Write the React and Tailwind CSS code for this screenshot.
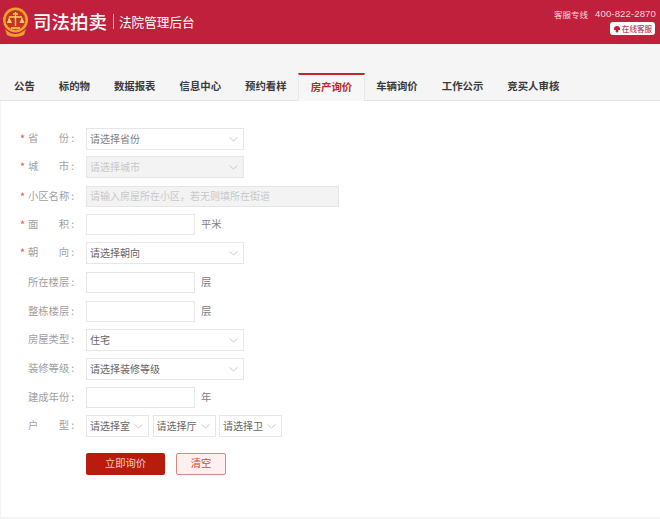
import React from "react";

const font = { fontFamily: '"Noto Sans CJK SC", "Liberation Sans", sans-serif' };

const tabs = ["公告", "标的物", "数据报表", "信息中心", "预约看样", "房产询价", "车辆询价", "工作公示", "竞买人审核"];

function Chevron() {
  return (
    <svg width="9" height="5" viewBox="0 0 9 5" fill="none" className="shrink-0">
      <path d="M0.5 0.5 L4.5 4 L8.5 0.5" stroke="#c4c4c4" strokeWidth="0.9" />
    </svg>
  );
}

function Select({ text, width = "w-[158px]", disabled = false, dark = false }) {
  return (
    <div
      className={`${width} h-[22px] flex items-center justify-between pl-[3px] pr-[5px] border border-[#e6e6e6] ${
        disabled ? "bg-[#f3f3f3] text-[#c8c8c8]" : "bg-white"
      } ${dark ? "text-[#666666]" : disabled ? "" : "text-[#808080]"} text-[10px]`}
    >
      <span className="whitespace-nowrap pb-[2px]">{text}</span>
      <Chevron />
    </div>
  );
}

function Input({ unit }) {
  return (
    <div className="flex items-center">
      <div className="w-[109px] h-[21px] border border-[#e6e6e6] bg-white" />
      <span className="ml-[6px] pb-[2px] text-[10.3px] text-[#808080]">{unit}</span>
    </div>
  );
}

function Label({ a, b, req }) {
  return (
    <div className="w-[85px] shrink-0 flex items-center text-[10.3px] text-[#a0a0a0] pb-[2px]">
      <span className="w-[8px] ml-[19px] text-[#e2574c] text-[11px] leading-none">{req ? "*" : ""}</span>
      <span className="w-[46px] flex justify-between whitespace-nowrap">
        {b ? (
          <>
            <span>{a}</span>
            <span>{b}<span className="ml-[2px]">:</span></span>
          </>
        ) : (
          <span>{a}<span className="ml-[2px]">:</span></span>
        )}
      </span>
    </div>
  );
}

function Row({ h, children }) {
  return <div className={`flex items-start ${h}`}>{children}</div>;
}

function Lbl({ children }) {
  return <div className="h-[22px] flex items-center">{children}</div>;
}

export default function App() {
  return (
    <div className="w-[660px] h-[519px] bg-[#f5f5f5] overflow-hidden flex flex-col" style={font}>
      <header className="h-[44px] shrink-0 bg-[#c0203b] flex justify-between text-white">
        <div className="flex items-center pl-[2px] pb-[1px]">
          <svg width="27" height="32" viewBox="0 0 27 32">
            <path d="M3 23 Q13 33 24 23 L22 29 Q13 33 5 29 Z" fill="#e8a030" />
            <circle cx="13.5" cy="14" r="12.5" fill="#f0a32c" />
            <circle cx="13.5" cy="14" r="10" fill="#c9331f" />
            <path d="M13.5 6 V20 M11 8 H16 M7 11 H20 M9 22 H18" stroke="#f7d36a" strokeWidth="1.4" fill="none" />
            <path d="M7 11 L5 17 H10 Z M20 11 L17.5 17 H22.5 Z" fill="#f7d36a" />
          </svg>
          <span className="ml-[4px] text-[18.5px] font-medium leading-none whitespace-nowrap">司法拍卖</span>
          <span className="ml-[6px] w-px h-[15px] bg-[#eeb9c2]" />
          <span className="ml-[5px] text-[12.6px] leading-none mt-[2px] whitespace-nowrap">法院管理后台</span>
        </div>
        <div className="flex flex-col items-end pr-[5px] pt-[8px]">
          <div className="flex items-center leading-[12px] text-[#f6d8dd] -mr-px">
            <span className="text-[8.5px]">客服专线</span>
            <span className="ml-[7px] text-[9.6px] tracking-[0.1px]" style={{ fontFamily: '"Liberation Sans", sans-serif' }}>
              400-822-2870
            </span>
          </div>
          <div className="mt-[2px] w-[45px] h-[13px] bg-white rounded-[3px] flex items-center justify-center text-[#b8475a] text-[7.6px] leading-none font-medium">
            <svg width="8" height="8" viewBox="0 0 8 8" className="mr-[1px]">
              <path d="M1 4 a3 3 0 0 1 6 0 v1 h-6 z" fill="#c21f3a" />
              <circle cx="4" cy="6" r="1.5" fill="#c21f3a" />
            </svg>
            在线客服
          </div>
        </div>
      </header>

      <nav className="h-[57px] shrink-0 flex items-end pl-[2px] border-b border-[#e3e3e3]">
        {tabs.map((t, i) =>
          i === 5 ? (
            <div
              key={t}
              className="h-[28px] px-[12px] pb-[2px] -mb-px flex items-center text-[10.4px] font-bold text-[#c0272d] bg-[#f7f7f7] border-t-2 border-t-[#c0272d] border-x border-x-[#e8e8e8] mx-[-1px] whitespace-nowrap"
            >
              {t}
            </div>
          ) : (
            <div key={t} className="h-[27px] px-[12px] pb-[2px] flex items-center text-[10.4px] font-bold text-[#3a3a3a] whitespace-nowrap">
              {t}
            </div>
          )
        )}
      </nav>

      <main className="h-[416px] shrink-0 ml-px bg-white pt-[27px]">
        <Row h="h-[28px]"><Lbl><Label a="省" b="份" req /></Lbl><Select text="请选择省份" /></Row>
        <Row h="h-[30px]"><Lbl><Label a="城" b="市" req /></Lbl><Select text="请选择城市" disabled /></Row>
        <Row h="h-[28px]">
          <Lbl><Label a="小区名称" req /></Lbl>
          <div className="w-[253px] h-[21px] flex items-center px-[3px] pb-[2px] bg-[#f3f3f3] border border-[#e6e6e6] text-[10px] text-[#c8c8c8] whitespace-nowrap">
            请输入房屋所在小区，若无则填所在街道
          </div>
        </Row>
        <Row h="h-[28px]"><Lbl><Label a="面" b="积" req /></Lbl><Input unit="平米" /></Row>
        <Row h="h-[30px]"><Lbl><Label a="朝" b="向" req /></Lbl><Select text="请选择朝向" dark /></Row>
        <Row h="h-[29px]"><Lbl><Label a="所在楼层" /></Lbl><Input unit="层" /></Row>
        <Row h="h-[28px]"><Lbl><Label a="整栋楼层" /></Lbl><Input unit="层" /></Row>
        <Row h="h-[29px]"><Lbl><Label a="房屋类型" /></Lbl><Select text="住宅" dark /></Row>
        <Row h="h-[29px]"><Lbl><Label a="装修等级" /></Lbl><Select text="请选择装修等级" dark /></Row>
        <Row h="h-[28px]"><Lbl><Label a="建成年份" /></Lbl><Input unit="年" /></Row>
        <Row h="h-[38px]">
          <Lbl><Label a="户" b="型" /></Lbl>
          <div className="flex gap-[3.5px]">
            <Select text="请选择室" width="w-[63px]" dark />
            <Select text="请选择厅" width="w-[63px]" dark />
            <Select text="请选择卫" width="w-[63px]" dark />
          </div>
        </Row>
        <div className="flex pl-[85px] gap-[11px]">
          <button className="w-[79px] h-[22px] pb-[2px] bg-[#b81c0c] rounded-[2px] text-[#f6cfc8] text-[10.3px]">立即询价</button>
          <button className="w-[50px] h-[22px] pb-[2px] bg-[#fdf0ee] border border-[#d98880] rounded-[2px] text-[#c94a3d] text-[10.3px]">清空</button>
        </div>
      </main>
    </div>
  );
}
